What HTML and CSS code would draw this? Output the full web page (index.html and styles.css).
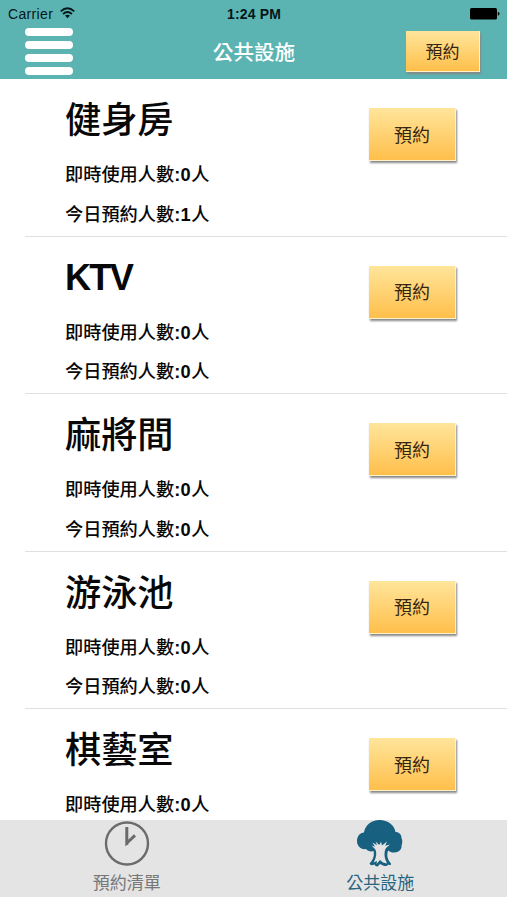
FILE: index.html
```html
<!DOCTYPE html>
<html lang="zh-Hant">
<head>
<meta charset="utf-8">
<title>公共設施</title>
<link rel="stylesheet" href="styles.css">
</head>
<body>
<div class="app">
  <header class="header">
    <div class="status">
      <div class="carrier"><span>Carrier</span>
        <svg class="wifi" width="15" height="12" viewBox="0 0 15 12" fill="none" stroke="#06171a" stroke-width="1.8"><path d="M.7 4.3Q7.5-1.7 14.3 4.3M3 7Q7.5 3.1 12 7"/><path d="M5 8.6Q7.5 6.8 10 8.6L7.5 11.2Z" fill="#06171a" stroke="none"/></svg>
      </div>
      <div class="time">1:24 PM</div>
      <svg class="battery" width="30" height="12" viewBox="0 0 30 12"><rect width="27" height="11.5" rx="1.5"/><path d="M27.8 3.8Q29.6 4.2 29.6 5.8T27.8 7.8Z"/></svg>
    </div>
    <div class="nav">
      <div class="menu"><i></i><i></i><i></i><i></i></div>
      <h1 class="heading">公共設施</h1>
      <button class="book small">預約</button>
    </div>
  </header>
  <main class="list">
    <section class="row"><div class="info"><h2>健身房</h2><p>即時使用人數<b>:0</b>人</p><p>今日預約人數<b>:1</b>人</p></div><button class="book">預約</button></section>
    <section class="row"><div class="info"><h2 class="latin">KTV</h2><p>即時使用人數<b>:0</b>人</p><p>今日預約人數<b>:0</b>人</p></div><button class="book">預約</button></section>
    <section class="row"><div class="info"><h2>麻將間</h2><p>即時使用人數<b>:0</b>人</p><p>今日預約人數<b>:0</b>人</p></div><button class="book">預約</button></section>
    <section class="row"><div class="info"><h2>游泳池</h2><p>即時使用人數<b>:0</b>人</p><p>今日預約人數<b>:0</b>人</p></div><button class="book">預約</button></section>
    <section class="row"><div class="info"><h2>棋藝室</h2><p>即時使用人數<b>:0</b>人</p></div><button class="book">預約</button></section>
  </main>
  <footer class="tabs">
    <div class="tab">
      <svg width="46" height="46" viewBox="0 0 46 46" fill="none" stroke="#6b6b6b"><circle cx="23" cy="23" r="21" stroke-width="2.4"/><path d="M22.800 6.500V22.500L31 14.800M22.800 20V24.500" stroke-width="3"/></svg>
      <span>預約清單</span>
    </div>
    <div class="tab active">
      <svg width="46" height="47" viewBox="0 0 46 47">
        <path fill="#17607f" d="M7 12.500C8 5 14.500 0 22.500 0C31 0 37.500 5 38.500 12C42 12 44.500 14.500 44.500 18C46 21 45 24.500 44.500 26C45 29 41.500 32.500 37.500 32.500C35 33 32.500 31.500 31 30.500C29.800 35 30 39 34 43.500Q34.500 46 31.500 44.500Q29.500 47 26 45.500L23 44L21 46.200Q18.500 47 17.500 44.500Q13.500 46.500 12.500 43.500C16.500 39.500 17.500 35 16.500 31C14 32 10.500 31 9 29C4 30 0 26 0 21C0 16 3 13 7 12.500Z"/>
        <path fill="#e4e4e4" d="M14.500 25.500L18 26.800L15.500 22.500L20 25.200L18.500 21.500L22.300 25L24 21.800L25 25.500L30 21.500L28.200 25.800L33 24.500L29 28C27 31 27 37 29 41L30 43.500L26 42.500L23 40L19.500 44L20 41L16.500 42.500C20 37 20 31 17.500 28.500Z"/>
      </svg>
      <span>公共設施</span>
    </div>
  </footer>
</div>
</body>
</html>
```
FILE: styles.css
```css
* { box-sizing: border-box; }
body {
  margin: 0;
  background: #fff;
  color: #080808;
  font-family: "Liberation Sans", "Noto Sans CJK TC", sans-serif;
}
h1, h2, p { margin: 0; }
.app {
  width: 507px;
  height: 900px;
  overflow: hidden;
  display: flex;
  flex-direction: column;
  padding-bottom: 3px;
}
.header { height: 79px; flex: none; background: #5bb4b2; }
.status {
  height: 27px;
  padding: 0 7px 0 8px;
  display: grid;
  grid-template-columns: 1fr auto 1fr;
  align-items: center;
  font-size: 14px;
  color: #06171a;
}
.carrier { display: flex; align-items: center; gap: 7px; letter-spacing: .35px; }
.wifi { margin-top: -2px; }
.time { font-weight: bold; letter-spacing: .15px; }
.battery { justify-self: end; fill: #000; }
.nav {
  height: 52px;
  padding: 0 27px 0 25px;
  display: grid;
  grid-template-columns: 74px 1fr 74px;
  align-items: start;
}
.menu { display: grid; gap: 4.700px; width: 48px; padding-top: 1px; }
.menu i { height: 8.300px; border-radius: 4px; background: #fff; }
.heading {
  padding: 9px 0 0 3px;
  line-height: 31px;
  text-align: center;
  font-family: "Noto Sans CJK TC", sans-serif;
  font-size: 20.600px;
  font-weight: 500;
  color: #fff;
}
.book {
  flex: none;
  width: 87px;
  height: 53px;
  margin: 0;
  padding: 0;
  border: 0 solid #fff2c9;
  border-width: 0 1px 1px 0;
  font-family: "Noto Sans CJK TC", sans-serif;
  font-size: 18px;
  line-height: 51px;
  color: #35250d;
  background: linear-gradient(#ffe59b, #ffbf4b);
  box-shadow: 1px 2px 2px #888;
}
.book.small {
  width: 74px;
  height: 41px;
  margin-top: 4px;
  font-size: 17px;
  line-height: 40px;
}
.list { flex: 1; min-height: 0; overflow: hidden; }
.row {
  height: 157.600px;
  margin-left: 25px;
  padding: 0 51px 0 40px;
  display: flex;
  align-items: flex-start;
  justify-content: space-between;
  border-bottom: 1px solid #e0e0e0;
}
.row .book { margin-top: 29px; }
.info { padding-top: 13px; }
.info h2 {
  height: 61px;
  line-height: 50px;
  font-family: "Noto Sans CJK TC", sans-serif;
  font-size: 36.200px;
  font-weight: 500;
}
.info h2.latin {
  padding-top: 3px;
  font-family: "Liberation Sans", sans-serif;
  font-weight: bold;
  letter-spacing: -1.800px;
}
.info p {
  height: 39.500px;
  line-height: 40px;
  font-family: "Noto Sans CJK TC", sans-serif;
  font-size: 18.200px;
  font-weight: 500;
  white-space: nowrap;
}
.info b { font-family: "Liberation Sans", sans-serif; font-weight: bold; letter-spacing: .4px; }
.tabs { height: 77px; flex: none; display: flex; background: #e4e4e4; }
.tab {
  flex: 1;
  display: flex;
  flex-direction: column;
  align-items: center;
  color: #777;
  font-family: "Noto Sans CJK TC", sans-serif;
  font-size: 17px;
  line-height: 30px;
}
.tab svg { flex: none; height: 47px; }
.active { color: #28657f; }
```
